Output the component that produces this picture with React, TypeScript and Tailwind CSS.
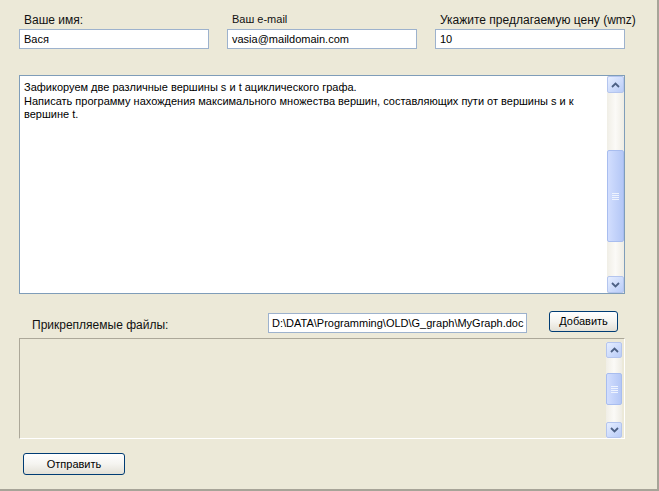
import React from "react";

function Chevron({ up }: { up: boolean }) {
  return (
    <svg width="9" height="6" viewBox="0 0 9 6" className="block">
      <path
        d={up ? "M1 5 L4.5 1.5 L8 5" : "M1 1 L4.5 4.5 L8 1"}
        stroke="#4D6185"
        strokeWidth="1.8"
        fill="none"
      />
    </svg>
  );
}

function ArrowBtn({ up, cls }: { up: boolean; cls: string }) {
  return (
    <div
      className={`${cls} shrink-0 rounded-[2px] border border-[#B4C5EE] bg-linear-to-br from-[#E6EEFF] to-[#B9CCF8] flex items-center justify-center`}
    >
      <Chevron up={up} />
    </div>
  );
}

function Thumb({ cls }: { cls: string }) {
  return (
    <div
      className={`${cls} shrink-0 rounded-[2px] border border-[#A8BDEF] bg-linear-to-r from-[#D2DEFE] to-[#B4C7F6] flex flex-col items-center justify-center gap-[1px]`}
    >
      <div className="w-[7px] h-[1px] bg-[#EEF3FE]" />
      <div className="w-[7px] h-[1px] bg-[#EEF3FE]" />
      <div className="w-[7px] h-[1px] bg-[#EEF3FE]" />
      <div className="w-[7px] h-[1px] bg-[#EEF3FE]" />
    </div>
  );
}

function Field({
  label,
  labelCls,
  value,
}: {
  label: string;
  labelCls: string;
  value: string;
}) {
  return (
    <div className="flex flex-col w-[190px]">
      <div className={`h-[17px] whitespace-nowrap ${labelCls}`}>{label}</div>
      <div className="h-[20px] border border-[#9DB2CD] bg-white px-[4px] text-[11px] leading-[18px] whitespace-nowrap overflow-hidden">
        {value}
      </div>
    </div>
  );
}

export default function App() {
  return (
    <div className="w-[659px] h-[491px] bg-[#ECE9D8] border-r-2 border-b-2 border-[#A7A498] text-black font-['Liberation_Sans',Arial,sans-serif] flex flex-col">
      <div className="flex gap-[18px] ml-[19px] mt-[12px]">
        <Field
          label="Ваше имя:"
          labelCls="pl-[5px] pt-[1px] text-[12px] leading-[14px] text-[#111]"
          value="Вася"
        />
        <Field
          label="Ваш e-mail"
          labelCls="pl-[5px] pt-[1px] text-[11px] leading-[13px] text-[#111]"
          value="vasia@maildomain.com"
        />
        <Field
          label="Укажите предлагаемую цену (wmz)"
          labelCls="pl-[5px] pt-[1px] text-[12px] leading-[14px] text-[#111]"
          value="10"
        />
      </div>

      <div className="ml-[19px] mt-[26px] w-[606px] h-[219px] border border-[#7F9DB9] bg-white flex">
        <div className="flex-1 pl-[4px] pt-[5px] text-[11px] leading-[13.5px] whitespace-nowrap overflow-hidden">
          <div>Зафикоруем две различные вершины s и t ациклического графа.</div>
          <div>
            Написать программу нахождения максимального множества вершин,
            составляющих пути от вершины s и к
          </div>
          <div>вершине t.</div>
        </div>
        <div className="w-[17px] flex flex-col bg-linear-to-r from-[#F0EEE6] via-[#FBFAF7] to-[#EEECE4]">
          <ArrowBtn up cls="h-[17px]" />
          <div className="h-[57px] shrink-0" />
          <Thumb cls="h-[92px]" />
          <div className="flex-1" />
          <ArrowBtn up={false} cls="h-[17px]" />
        </div>
      </div>

      <div className="flex items-start h-[22px] mt-[17px]">
        <div className="w-[268px] pl-[32px] pt-[7px] text-[12px] leading-[14px] whitespace-nowrap text-[#111]">
          Прикрепляемые файлы:
        </div>
        <div className="mt-[2px] w-[259px] h-[20px] border border-[#9DB2CD] bg-white px-[3px] text-[11px] leading-[18px] whitespace-nowrap overflow-hidden">
          D:\DATA\Programming\OLD\G_graph\MyGraph.doc
        </div>
        <button className="ml-[22px] w-[69px] h-[21px] rounded-[3px] border border-[#003C74] bg-linear-to-b from-white via-[#F5F4F0] to-[#E3E0D6] text-[11px] leading-[19px] text-black">
          Добавить
        </button>
      </div>

      <div className="ml-[19px] mt-[5px] w-[606px] h-[101px] border border-t-[#ACA899] border-l-[#ACA899] border-b-white border-r-white flex justify-end pt-[3px] pr-[2px]">
        <div className="w-[16px] h-[96px] flex flex-col bg-linear-to-r from-[#F0EEE6] via-[#FBFAF7] to-[#EEECE4]">
          <ArrowBtn up cls="h-[16px]" />
          <div className="h-[15px] shrink-0" />
          <Thumb cls="h-[32px]" />
          <div className="flex-1" />
          <ArrowBtn up={false} cls="h-[16px]" />
        </div>
      </div>

      <button className="ml-[23px] mt-[14px] w-[102px] h-[22px] rounded-[3px] border border-[#003C74] bg-linear-to-b from-white via-[#F5F4F0] to-[#E3E0D6] text-[11px] leading-[20px] text-black">
        Отправить
      </button>
    </div>
  );
}
